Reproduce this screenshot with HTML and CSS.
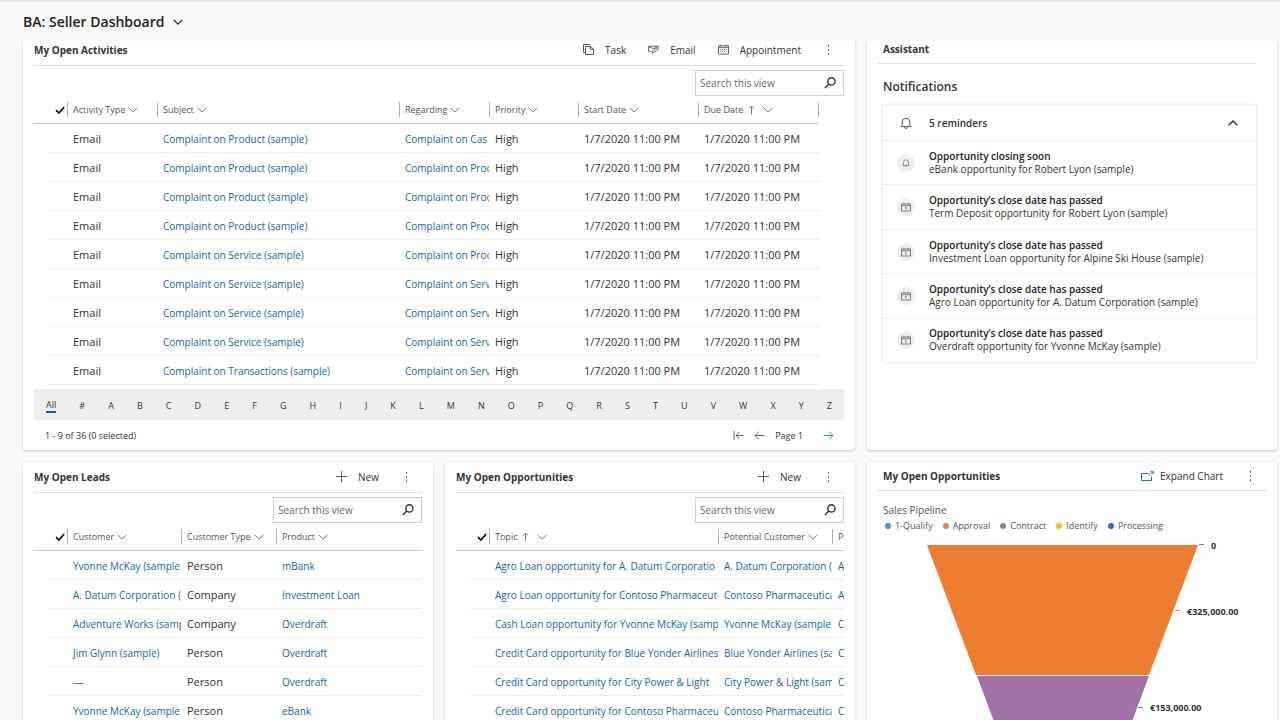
FILE: index.html
```html
<!DOCTYPE html>
<html lang="en">
<head>
  <meta charset="UTF-8" />
  <meta name="viewport" content="width=device-width, initial-scale=1.0" />
  <title>BA: Seller Dashboard</title>
  <link rel="stylesheet" href="styles.css">
</head>
<body>
  <!-- ===== ICON SPRITE ===== -->
  <svg class="sprite" aria-hidden="true">
    <symbol id="i-chevron" viewBox="0 0 10 10"><path d="M.7 2.8 5 7.1l4.3-4.3" /></symbol>
    <symbol id="i-chevron-up" viewBox="0 0 10 10"><path d="M.7 7.2 5 2.9l4.3 4.3" /></symbol>
    <symbol id="i-sort" viewBox="0 0 7 10"><path d="M3.5 9.5V1M1 3.5 3.5 1 6 3.5" /></symbol>
    <symbol id="i-check" viewBox="0 0 10 10"><path d="M1 5.2 3.9 8 9.2 2" /></symbol>
    <symbol id="i-search" viewBox="0 0 12 12"><circle cx="7.4" cy="4.4" r="3.6" /><path d="M4.8 7 .8 11" /></symbol>
    <symbol id="i-more" viewBox="0 0 3 12"><path d="M1.5 1v1.4M1.5 5.3v1.4M1.5 9.6V11" /></symbol>
    <symbol id="i-plus" viewBox="0 0 11 11"><path d="M5.5 0v11M0 5.5h11" /></symbol>
    <symbol id="i-task" viewBox="0 0 11 11"><path d="M2.5 8.5H.5v-8h5.7l1.3 1.3M2.5 2.500h5l3 2.500v5.500h-8zM7.300 2.500v2.700h3" /></symbol>
    <symbol id="i-email" viewBox="0 0 12 10"><path d="M11.500 3V1.500H.5v5.500h3.300M.7 1.800l5 2.400 5.300-2.400M4.600 9l.5-2.400 4.600-3.300 1.500 1.400-4.100 3.500z" /></symbol>
    <symbol id="i-appt" viewBox="0 0 12 11"><path d="M.5 1.500h11v9H.5zM.5 3.500h11M3 .3v2M9 .3v2" /><path stroke-dasharray="1 1" d="M2.500 5.500h7M2.500 7.500h7" /></symbol>
    <symbol id="i-bell" viewBox="0 0 12 12"><path d="M1 9.600h10M2.200 9.500V5a3.800 3.800 0 0 1 7.600 0v4.500M4.600 10.200a1.400 1.200 0 0 0 2.800 0" /></symbol>
    <symbol id="i-calendar" viewBox="0 0 12 12"><path d="M.6 2.400h10.800v8.400H.6zM.6 4.400h10.800M3.400 1v1.500M8.600 1v1.500M6 6v3M5 6.300h1" /></symbol>
    <symbol id="i-expand" viewBox="0 0 13 10"><path d="M7.500 2.500h-7v7h10V5.500M8 4.500 12 .8M9.500.7h2.700v2.600" /></symbol>
    <symbol id="i-first" viewBox="0 0 11 10"><path d="M1 .5v9M10.500 5H3M6.500 1.500 3 5l3.500 3.500" /></symbol>
    <symbol id="i-prev" viewBox="0 0 11 10"><path d="M10.500 5H1M4.800 1.200 1 5l3.800 3.800" /></symbol>
    <symbol id="i-next" viewBox="0 0 11 10"><path d="M.5 5H10M6.200 1.200 10 5 6.200 8.800" /></symbol>
  </svg>

  <!-- ===== TOP BAR ===== -->
  <header class="topbar">
    <h1><button type="button">BA: Seller Dashboard <svg class="icon chevron"><use href="#i-chevron" /></svg></button></h1>
  </header>

  <!-- ===== DASHBOARD ===== -->
  <main>
    <div class="dashboard">

      <!-- My Open Activities -->
      <section class="card wide">
        <div class="card-head">
          <h2>My Open Activities</h2>
          <div class="commands">
            <button type="button"><svg class="icon tool"><use href="#i-task" /></svg>Task</button>
            <button type="button"><svg class="icon tool"><use href="#i-email" /></svg>Email</button>
            <button type="button"><svg class="icon tool"><use href="#i-appt" /></svg>Appointment</button>
            <button type="button" class="more" aria-label="More commands"><svg class="icon"><use href="#i-more" /></svg></button>
          </div>
        </div>
        <div class="search">
          <input type="text" placeholder="Search this view" aria-label="Search activities">
          <button type="button" aria-label="Start search"><svg class="icon"><use href="#i-search" /></svg></button>
        </div>
        <table class="grid activities">
          <colgroup><col class="c-check"><col class="c-type"><col><col class="c-regarding"><col class="c-priority"><col class="c-date"><col class="c-due"></colgroup>
          <thead>
            <tr>
              <th class="check"><svg class="icon"><use href="#i-check" /></svg></th>
              <th><span>Activity Type <svg class="icon chevron"><use href="#i-chevron" /></svg></span></th>
              <th><span>Subject <svg class="icon chevron"><use href="#i-chevron" /></svg></span></th>
              <th><span>Regarding <svg class="icon chevron"><use href="#i-chevron" /></svg></span></th>
              <th><span>Priority <svg class="icon chevron"><use href="#i-chevron" /></svg></span></th>
              <th><span>Start Date <svg class="icon chevron"><use href="#i-chevron" /></svg></span></th>
              <th class="last"><span>Due Date <svg class="icon sort"><use href="#i-sort" /></svg> <svg class="icon chevron"><use href="#i-chevron" /></svg></span></th>
            </tr>
          </thead>
          <tbody>
            <tr><td></td><td>Email</td><td><a href="#">Complaint on Product (sample)</a></td><td><a href="#">Complaint on Cas</a></td><td>High</td><td>1/7/2020 11:00 PM</td><td>1/7/2020 11:00 PM</td></tr>
            <tr><td></td><td>Email</td><td><a href="#">Complaint on Product (sample)</a></td><td><a href="#">Complaint on Proc</a></td><td>High</td><td>1/7/2020 11:00 PM</td><td>1/7/2020 11:00 PM</td></tr>
            <tr><td></td><td>Email</td><td><a href="#">Complaint on Product (sample)</a></td><td><a href="#">Complaint on Proc</a></td><td>High</td><td>1/7/2020 11:00 PM</td><td>1/7/2020 11:00 PM</td></tr>
            <tr><td></td><td>Email</td><td><a href="#">Complaint on Product (sample)</a></td><td><a href="#">Complaint on Proc</a></td><td>High</td><td>1/7/2020 11:00 PM</td><td>1/7/2020 11:00 PM</td></tr>
            <tr><td></td><td>Email</td><td><a href="#">Complaint on Service (sample)</a></td><td><a href="#">Complaint on Proc</a></td><td>High</td><td>1/7/2020 11:00 PM</td><td>1/7/2020 11:00 PM</td></tr>
            <tr><td></td><td>Email</td><td><a href="#">Complaint on Service (sample)</a></td><td><a href="#">Complaint on Serv</a></td><td>High</td><td>1/7/2020 11:00 PM</td><td>1/7/2020 11:00 PM</td></tr>
            <tr><td></td><td>Email</td><td><a href="#">Complaint on Service (sample)</a></td><td><a href="#">Complaint on Serv</a></td><td>High</td><td>1/7/2020 11:00 PM</td><td>1/7/2020 11:00 PM</td></tr>
            <tr><td></td><td>Email</td><td><a href="#">Complaint on Service (sample)</a></td><td><a href="#">Complaint on Serv</a></td><td>High</td><td>1/7/2020 11:00 PM</td><td>1/7/2020 11:00 PM</td></tr>
            <tr><td></td><td>Email</td><td><a href="#">Complaint on Transactions (sample)</a></td><td><a href="#">Complaint on Serv</a></td><td>High</td><td>1/7/2020 11:00 PM</td><td>1/7/2020 11:00 PM</td></tr>
          </tbody>
        </table>
        <nav class="jumpbar" aria-label="Filter by letter">
          <a href="#" class="active">All</a><a href="#">#</a><a href="#">A</a><a href="#">B</a><a href="#">C</a><a href="#">D</a><a href="#">E</a><a href="#">F</a><a href="#">G</a><a href="#">H</a><a href="#">I</a><a href="#">J</a><a href="#">K</a><a href="#">L</a><a href="#">M</a><a href="#">N</a><a href="#">O</a><a href="#">P</a><a href="#">Q</a><a href="#">R</a><a href="#">S</a><a href="#">T</a><a href="#">U</a><a href="#">V</a><a href="#">W</a><a href="#">X</a><a href="#">Y</a><a href="#">Z</a>
        </nav>
        <div class="pager">
          <span>1 - 9 of 36 (0 selected)</span>
          <div class="pages">
            <button type="button" aria-label="First page"><svg class="icon"><use href="#i-first" /></svg></button>
            <button type="button" aria-label="Previous page"><svg class="icon"><use href="#i-prev" /></svg></button>
            <span>Page 1</span>
            <button type="button" class="next" aria-label="Next page"><svg class="icon"><use href="#i-next" /></svg></button>
          </div>
        </div>
      </section>

      <!-- Assistant -->
      <section class="card assistant">
        <div class="card-head">
          <h2>Assistant</h2>
        </div>
        <h3>Notifications</h3>
        <div class="reminders">
          <button type="button" class="reminders-head">
            <svg class="icon bell"><use href="#i-bell" /></svg>
            <span>5 reminders</span>
            <svg class="icon chevron"><use href="#i-chevron-up" /></svg>
          </button>
          <ul>
            <li><i><svg class="icon small"><use href="#i-bell" /></svg></i><p><b>Opportunity closing soon</b>eBank opportunity for Robert Lyon (sample)</p></li>
            <li><i><svg class="icon"><use href="#i-calendar" /></svg></i><p><b>Opportunity’s close date has passed</b>Term Deposit opportunity for Robert Lyon (sample)</p></li>
            <li><i><svg class="icon"><use href="#i-calendar" /></svg></i><p><b>Opportunity’s close date has passed</b>Investment Loan opportunity for Alpine Ski House (sample)</p></li>
            <li><i><svg class="icon"><use href="#i-calendar" /></svg></i><p><b>Opportunity’s close date has passed</b>Agro Loan opportunity for A. Datum Corporation (sample)</p></li>
            <li><i><svg class="icon"><use href="#i-calendar" /></svg></i><p><b>Opportunity’s close date has passed</b>Overdraft opportunity for Yvonne McKay (sample)</p></li>
          </ul>
        </div>
      </section>

      <!-- My Open Leads -->
      <section class="card">
        <div class="card-head">
          <h2>My Open Leads</h2>
          <div class="commands">
            <button type="button"><svg class="icon tool"><use href="#i-plus" /></svg>New</button>
            <button type="button" class="more" aria-label="More commands"><svg class="icon"><use href="#i-more" /></svg></button>
          </div>
        </div>
        <div class="search">
          <input type="text" placeholder="Search this view" aria-label="Search leads">
          <button type="button" aria-label="Start search"><svg class="icon"><use href="#i-search" /></svg></button>
        </div>
        <table class="grid">
          <colgroup><col class="c-check"><col class="c-customer"><col class="c-ctype"><col></colgroup>
          <thead>
            <tr>
              <th class="check"><svg class="icon"><use href="#i-check" /></svg></th>
              <th><span>Customer <svg class="icon chevron"><use href="#i-chevron" /></svg></span></th>
              <th><span>Customer Type <svg class="icon chevron"><use href="#i-chevron" /></svg></span></th>
              <th><span>Product <svg class="icon chevron"><use href="#i-chevron" /></svg></span></th>
            </tr>
          </thead>
          <tbody>
            <tr><td></td><td><a href="#">Yvonne McKay (sample</a></td><td>Person</td><td><a href="#">mBank</a></td></tr>
            <tr><td></td><td><a href="#">A. Datum Corporation (</a></td><td>Company</td><td><a href="#">Investment Loan</a></td></tr>
            <tr><td></td><td><a href="#">Adventure Works (samp</a></td><td>Company</td><td><a href="#">Overdraft</a></td></tr>
            <tr><td></td><td><a href="#">Jim Glynn (sample)</a></td><td>Person</td><td><a href="#">Overdraft</a></td></tr>
            <tr><td></td><td>---</td><td>Person</td><td><a href="#">Overdraft</a></td></tr>
            <tr><td></td><td><a href="#">Yvonne McKay (sample</a></td><td>Person</td><td><a href="#">eBank</a></td></tr>
          </tbody>
        </table>
      </section>

      <!-- My Open Opportunities: list -->
      <section class="card">
        <div class="card-head">
          <h2>My Open Opportunities</h2>
          <div class="commands">
            <button type="button"><svg class="icon tool"><use href="#i-plus" /></svg>New</button>
            <button type="button" class="more" aria-label="More commands"><svg class="icon"><use href="#i-more" /></svg></button>
          </div>
        </div>
        <div class="search">
          <input type="text" placeholder="Search this view" aria-label="Search opportunities">
          <button type="button" aria-label="Start search"><svg class="icon"><use href="#i-search" /></svg></button>
        </div>
        <table class="grid">
          <colgroup><col class="c-check"><col><col class="c-customer"><col class="c-cut"></colgroup>
          <thead>
            <tr>
              <th class="check"><svg class="icon"><use href="#i-check" /></svg></th>
              <th><span>Topic <svg class="icon sort"><use href="#i-sort" /></svg> <svg class="icon chevron"><use href="#i-chevron" /></svg></span></th>
              <th><span>Potential Customer <svg class="icon chevron"><use href="#i-chevron" /></svg></span></th>
              <th><span>Pr</span></th>
            </tr>
          </thead>
          <tbody>
            <tr><td></td><td><a href="#">Agro Loan opportunity for A. Datum Corporatio</a></td><td><a href="#">A. Datum Corporation (</a></td><td><a href="#">A</a></td></tr>
            <tr><td></td><td><a href="#">Agro Loan opportunity for Contoso Pharmaceut</a></td><td><a href="#">Contoso Pharmaceutica</a></td><td><a href="#">A</a></td></tr>
            <tr><td></td><td><a href="#">Cash Loan opportunity for Yvonne McKay (samp</a></td><td><a href="#">Yvonne McKay (sample</a></td><td><a href="#">C</a></td></tr>
            <tr><td></td><td><a href="#">Credit Card opportunity for Blue Yonder Airlines</a></td><td><a href="#">Blue Yonder Airlines (sa</a></td><td><a href="#">C</a></td></tr>
            <tr><td></td><td><a href="#">Credit Card opportunity for City Power &amp; Light</a></td><td><a href="#">City Power &amp; Light (sam</a></td><td><a href="#">C</a></td></tr>
            <tr><td></td><td><a href="#">Credit Card opportunity for Contoso Pharmaceu</a></td><td><a href="#">Contoso Pharmaceutica</a></td><td><a href="#">C</a></td></tr>
          </tbody>
        </table>
      </section>

      <!-- My Open Opportunities: chart -->
      <section class="card chart">
        <div class="card-head">
          <h2>My Open Opportunities</h2>
          <div class="commands">
            <button type="button" class="expand"><svg class="icon tool"><use href="#i-expand" /></svg>Expand Chart</button>
            <button type="button" class="more" aria-label="More commands"><svg class="icon"><use href="#i-more" /></svg></button>
          </div>
        </div>
        <h3>Sales Pipeline</h3>
        <ul class="legend">
          <li class="qualify">1-Qualify</li>
          <li class="approval">Approval</li>
          <li class="contract">Contract</li>
          <li class="identify">Identify</li>
          <li class="processing">Processing</li>
        </ul>
        <svg class="funnel" viewBox="0 0 388 240" role="img" aria-label="Sales pipeline funnel">
          <path class="approval" d="M49 10h271l-49 130H98z" />
          <path class="contract" d="M99 141h172l-37 99H136z" />
          <path class="tick qualify" d="M321 9.500h5" />
          <path class="tick approval" d="M297 75.500h5" />
          <path class="tick contract" d="M260 172.500h5" />
          <text x="333" y="14">0</text>
          <text x="309" y="80">€325,000.00</text>
          <text x="272" y="176">€153,000.00</text>
        </svg>
      </section>

    </div>
  </main>
</body>
</html>
```
FILE: styles.css
```css
:root {
  --bg: #faf9f8;
  --fg: #333333;
  --muted: #666666;
  --link: #1464ac;
  --border: #ececec;
  --blue: #4a8fd8;
  --orange: #ed7d31;
  --purple: #a072a7;
}
* { box-sizing: border-box; margin: 0; padding: 0; }

body {
  font-family: "Open Sans", "Noto Sans", sans-serif;
  font-size: 10px;
  color: var(--fg);
  background: var(--bg);
  display: flex;
  flex-direction: column;
  height: 100vh;
  overflow: hidden;
}
button, input { font: inherit; color: inherit; border: none; background: none; }
button { cursor: pointer; }
ul { list-style: none; }
a { color: var(--link); text-decoration: none; }

.sprite { display: none; }
.icon {
  width: 11px;
  height: 11px;
  fill: none;
  stroke: currentColor;
  stroke-width: 1;
  flex-shrink: 0;
}
.icon.chevron { width: 10px; height: 10px; }
.icon.sort { width: 7px; height: 10px; }

/* ===== TOP BAR ===== */
.topbar {
  height: 41px;
  padding: 0 23px;
  border-top: 2px solid #eceae8;
  display: flex;
  align-items: center;
  flex-shrink: 0;
}
.topbar button {
  display: flex;
  align-items: center;
  gap: 8px;
  font-size: 14px;
  font-weight: 600;
  color: #222222;
}
.topbar .chevron { stroke-width: 1.2; }

/* ===== DASHBOARD ===== */
main { flex: 1; min-height: 0; overflow: hidden; }
.dashboard {
  display: grid;
  grid-template-columns: repeat(3, minmax(0, 1fr));
  gap: 12px;
  padding: 0 3px 0 23px;
  margin-top: -6px; /* first row sits partly under the top bar */
}
.card {
  background: #ffffff;
  padding: 0 11px;
  border-radius: 3px;
  box-shadow: 0 1px 3px rgba(0, 0, 0, 0.2);
}
.card.wide { grid-column: span 2; }

.card-head {
  height: 31px;
  padding-bottom: 1px;
  border-bottom: 1px solid #dddddd;
  display: flex;
  align-items: center;
  justify-content: space-between;
}
.card-head h2 { font-size: 10px; font-weight: 700; }
.commands { display: flex; gap: 22px; padding-right: 14px; }
.commands button { display: flex; align-items: center; gap: 11px; }
.commands .tool { color: #555555; }
.commands .more { margin-left: 4px; }
.commands .more .icon { width: 3px; height: 12px; }

/* ===== SEARCH ===== */
.search {
  width: 149px;
  height: 26px;
  margin: 4px 0 0 auto;
  border: 1px solid #d0d0d0;
  display: flex;
  align-items: center;
}
.search input { flex: 1; min-width: 0; padding-left: 4px; outline: none; }
.search input::placeholder { color: var(--muted); }
.search button { padding: 0 7px; display: flex; }
.search .icon { width: 12px; height: 12px; stroke-width: 1.4; }

/* ===== GRID ===== */
.grid { width: 100%; table-layout: fixed; border-collapse: separate; border-spacing: 0; }
.grid.activities { width: calc(100% - 25px); }
.c-check { width: 33px; }
.c-type { width: 90px; }
.c-regarding { width: 90px; }
.c-priority { width: 89px; }
.c-date { width: 120px; }
.c-due { width: 121px; }
.c-customer { width: 114px; }
.c-ctype { width: 95px; }
.c-cut { width: 12px; }

.grid th {
  height: 28px;
  border-bottom: 1px solid #c8c6c4;
  font-weight: 400;
  font-size: 9px;
  color: #555555;
  text-align: left;
  overflow: hidden;
}
.grid th span {
  height: 15px;
  padding-left: 5px;
  border-left: 1px solid #b0b0b0;
  display: flex;
  align-items: center;
  gap: 3px;
  white-space: nowrap;
}
.grid th.last span { border-right: 1px solid #b0b0b0; }
.grid th .icon { color: #777777; }
.grid .sort { margin-left: 2px; }
.grid .sort + .chevron { margin-left: 5px; }
.grid .check { padding-left: 21px; }
.grid .check .icon { width: 10px; height: 10px; stroke-width: 1.6; display: block; color: #000000; }
.grid tbody tr {
  /* row rule starts 14px in */
  background: linear-gradient(var(--border), var(--border)) 14px 100% / 100% 1px no-repeat;
}
.grid td {
  height: 29px;
  padding-left: 6px;
  font-size: 11px;
  white-space: nowrap;
  overflow: hidden;
}
.grid td a { font-size: 10px; }

/* ===== JUMP BAR + PAGER ===== */
.jumpbar {
  height: 31px;
  margin-top: 4px;
  padding: 2px 12px 0;
  background: #eeeeee;
  display: flex;
  align-items: center;
  justify-content: space-between;
  font-size: 9px;
}
.jumpbar a { color: var(--fg); }
.jumpbar .active { border-bottom: 2px solid #1160b7; line-height: 12px; }
.pager {
  height: 30px;
  padding: 0 10px 0 11px;
  display: flex;
  align-items: center;
  justify-content: space-between;
  font-size: 9px;
}
.pages { display: flex; align-items: center; gap: 10px; color: var(--fg); }
.pages button { display: flex; color: var(--muted); }
.pages .next { margin-left: 10px; color: #2b88d8; }

/* ===== ASSISTANT ===== */
.assistant .card-head { height: 29px; margin-right: 10px; padding-left: 5px; }
.assistant h3 { padding: 15px 5px 10px; font-size: 12px; line-height: 16px; font-weight: 600; }
.reminders {
  margin: 0 10px 0 5px;
  border-radius: 2px;
  box-shadow: 0 0 3px rgba(0, 0, 0, 0.2);
}
.reminders-head {
  width: 100%;
  height: 35px;
  padding: 0 18px 0 17px;
  display: flex;
  align-items: center;
  gap: 17px;
  font-weight: 600;
  text-align: left;
}
.reminders-head span { flex: 1; }
.reminders-head .bell { width: 12px; height: 12px; color: #555555; }
.reminders-head .chevron { stroke-width: 1.4; }
.reminders ul { min-height: 222px; display: flex; flex-direction: column; }
.reminders li {
  flex: 1;
  padding-left: 14px;
  border-top: 1px solid var(--border);
  display: flex;
  align-items: center;
  gap: 14px;
}
.reminders i {
  width: 18px;
  height: 18px;
  border-radius: 50%;
  background: #eeeeee;
  display: grid;
  place-items: center;
}
.reminders i .icon { width: 10px; height: 10px; color: #666666; }
.reminders i .small { width: 8px; height: 8px; }
.reminders p { line-height: 13px; }
.reminders b { display: block; font-weight: 600; color: #222222; }

/* ===== CHART ===== */
.chart .card-head { height: 29px; padding-left: 5px; }
.chart .expand { gap: 6px; }
.chart .expand .icon { width: 13px; height: 10px; color: #0078d4; }
.chart h3 { padding: 11px 5px 0; font-size: 10px; line-height: 16px; font-weight: 400; color: #555555; }
.legend { display: flex; gap: 10px; padding: 2px 7px 0; font-size: 9px; line-height: 12px; color: #555555; }
.legend li { display: flex; align-items: center; gap: 4px; }
.legend li::before { content: ""; width: 6px; height: 6px; border-radius: 50%; background: var(--blue); }
.legend .approval::before { background: var(--orange); }
.legend .contract::before { background: var(--purple); }
.legend .identify::before { background: #ffb900; }
.legend .processing::before { background: #3b66c0; }

.funnel { display: block; width: 100%; margin-top: 3px; font-size: 9px; font-weight: 700; }
.funnel text { fill: var(--fg); }
.funnel .approval { fill: var(--orange); }
.funnel .contract { fill: var(--purple); }
.funnel .tick { stroke: var(--blue); }
.funnel .tick.approval { stroke: var(--orange); }
.funnel .tick.contract { stroke: var(--purple); }
```
